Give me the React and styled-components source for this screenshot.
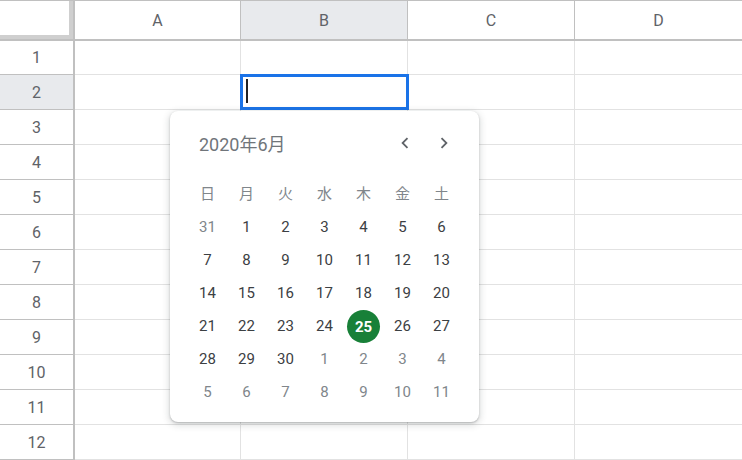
import React from "react";
import styled, { createGlobalStyle } from "styled-components";

const Global = createGlobalStyle`
  *, *::before, *::after { box-sizing: border-box; }
  html, body { margin: 0; padding: 0; background: #fff; overflow: hidden; }
  body { font-family: Roboto, "Noto Sans CJK JP", sans-serif; }
`;

const Wrap = styled.div`
  position: relative;
  width: 742px;
  height: 460px;
  overflow: hidden;
`;

const Sheet = styled.div`
  display: grid;
  grid-template-columns: 75px 166px 167px 167px 167px;
  grid-template-rows: 41px 34px repeat(11, 35px);
`;

const Corner = styled.div`
  border-top: 1px solid #c0c0c0;
  border-right: 2px solid #c0c0c0;
  border-bottom: 2px solid #c0c0c0;
  background: #fff;
  box-shadow: inset -4px -4px 0 #cfcfcf;
`;

const ColHead = styled.div`
  display: flex;
  align-items: center;
  justify-content: center;
  border-top: 1px solid #c0c0c0;
  border-bottom: 2px solid #c0c0c0;
  border-right: ${(p) => (p.$last ? "none" : "1px solid #c0c0c0")};
  background: ${(p) => (p.$active ? "#e8eaed" : "#fff")};
  color: #5f6368;
  font-size: 16px;
  padding-top: 1px;
`;

const RowHead = styled.div`
  display: flex;
  align-items: center;
  justify-content: center;
  border-right: 2px solid #c0c0c0;
  border-bottom: 1px solid #c0c0c0;
  background: ${(p) => (p.$active ? "#e8eaed" : "#fff")};
  color: #5f6368;
  font-size: 16px;
`;

const Cell = styled.div`
  position: relative;
  border-right: ${(p) => (p.$last ? "none" : "1px solid #e2e2e2")};
  border-bottom: 1px solid #e2e2e2;
  background: #fff;
`;

const ActiveCell = styled(Cell)`
  z-index: 2;
  &::after {
    content: "";
    position: absolute;
    top: -1px;
    left: -1px;
    right: -2px;
    bottom: -1px;
    border: 3px solid #1a73e8;
  }
`;

const Caret = styled.span`
  position: absolute;
  left: 5px;
  top: 4px;
  width: 2px;
  height: 24px;
  background: #202124;
`;

const Popup = styled.div`
  position: absolute;
  left: 170px;
  top: 111px;
  width: 309px;
  height: 311px;
  z-index: 5;
  background: #fff;
  border-radius: 8px;
  box-shadow: 0 1px 2px rgba(60, 64, 67, 0.3), 0 2px 6px 2px rgba(60, 64, 67, 0.15);
  padding: 16px 18px 14px;
  display: flex;
  flex-direction: column;
`;

const CalHeader = styled.div`
  height: 32px;
  display: flex;
  align-items: center;
  justify-content: space-between;
  padding-left: 11px;
  padding-right: 1px;
  margin-bottom: 17px;
`;

const Title = styled.div`
  font-size: 18px;
  color: #70757a;
`;

const Nav = styled.div`
  display: flex;
  gap: 7px;
`;

const NavButton = styled.button`
  width: 32px;
  height: 32px;
  border: none;
  background: transparent;
  padding: 0;
  display: flex;
  align-items: center;
  justify-content: center;
  color: #5f6368;
  cursor: pointer;
`;

const Days = styled.div`
  display: grid;
  grid-template-columns: repeat(7, 39px);
  grid-template-rows: 34px repeat(6, 33px);
`;

const Weekday = styled.div`
  display: flex;
  align-items: center;
  justify-content: center;
  font-size: 15px;
  color: #80868b;
  padding-bottom: 1px;
`;

const Day = styled.div`
  display: flex;
  align-items: center;
  justify-content: center;
  font-size: 15px;
  padding-top: 1px;
  color: ${(p) => (p.$muted ? "#80868b" : "#3c4043")};
`;

const Today = styled.span`
  width: 33px;
  height: 33px;
  border-radius: 50%;
  background: #188038;
  color: #fff;
  font-weight: 700;
  display: flex;
  align-items: center;
  justify-content: center;
  margin-top: 1px;
`;

const Chevron = ({ dir }) => (
  <svg width="22" height="22" viewBox="0 0 24 24" fill="currentColor">
    {dir === "left" ? (
      <path d="M15.41 7.41L14 6l-6 6 6 6 1.41-1.41L10.83 12z" />
    ) : (
      <path d="M8.59 16.59L10 18l6-6-6-6-1.41 1.41L13.17 12z" />
    )}
  </svg>
);

const cols = ["A", "B", "C", "D"];
const weekdays = ["日", "月", "火", "水", "木", "金", "土"];

const days = [];
days.push({ n: 31, muted: true });
for (let i = 1; i <= 30; i++) days.push({ n: i, muted: false });
for (let i = 1; i <= 11; i++) days.push({ n: i, muted: true });

export default function App() {
  const rows = Array.from({ length: 12 }, (_, i) => i + 1);
  return (
    <Wrap>
      <Global />
      <Sheet>
        <Corner />
        {cols.map((c, i) => (
          <ColHead key={c} $active={c === "B"} $last={i === cols.length - 1}>
            {c}
          </ColHead>
        ))}
        {rows.map((r) => (
          <React.Fragment key={r}>
            <RowHead $active={r === 2}>{r}</RowHead>
            {cols.map((c, i) =>
              r === 2 && c === "B" ? (
                <ActiveCell key={c}>
                  <Caret />
                </ActiveCell>
              ) : (
                <Cell key={c} $last={i === cols.length - 1} />
              )
            )}
          </React.Fragment>
        ))}
      </Sheet>
      <Popup>
        <CalHeader>
          <Title>2020年6月</Title>
          <Nav>
            <NavButton aria-label="前の月">
              <Chevron dir="left" />
            </NavButton>
            <NavButton aria-label="次の月">
              <Chevron dir="right" />
            </NavButton>
          </Nav>
        </CalHeader>
        <Days>
          {weekdays.map((w) => (
            <Weekday key={w}>{w}</Weekday>
          ))}
          {days.map((d, i) => (
            <Day key={i} $muted={d.muted}>
              {!d.muted && d.n === 25 ? <Today>25</Today> : d.n}
            </Day>
          ))}
        </Days>
      </Popup>
    </Wrap>
  );
}
